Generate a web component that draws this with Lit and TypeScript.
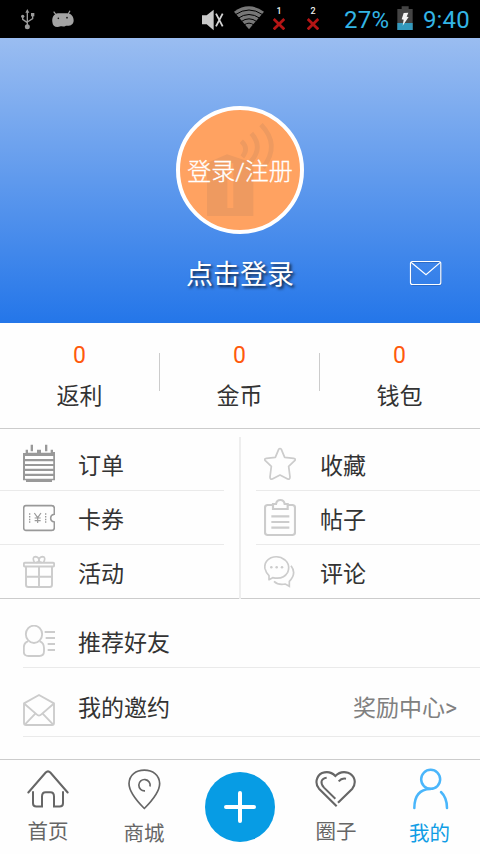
import { LitElement, html, svg, css } from "lit";
import { customElement } from "lit/decorators.js";
import { classMap } from "lit/directives/class-map.js";

const icon = (box: string, w: number, h: number, body: unknown) =>
  html`<svg width=${w} height=${h} viewBox=${box} fill="none">${body}</svg>`;

const icons = {
  usb: icon("60 24 48 66", 16, 22, svg`<g stroke="#9a9a9a" stroke-width="4">
    <path d="M82 34V78M68 50V58L82 68M98 46V56L82 66"/></g>
    <g fill="#9a9a9a"><path d="M76 38L82 27L88 38Z"/><circle cx="82" cy="80" r="7.500"/><circle cx="68" cy="49" r="5"/><path d="M93 39h10v10h-10z"/></g>`),
  robot: icon("153 27 72 60", 24, 20, svg`<path fill="#a3a3a3" d="M157 66C155 52 162 42 174 40H200C214 40 221 50 221 62C220 74 210 79 198 77C192 81 186 79 182 79C168 84 158 79 157 66Z"/>
    <path stroke="#a3a3a3" stroke-width="3.500" d="M168 44L161 35M204 43L210 32"/><circle cx="175" cy="55" r="2.500" fill="#111"/><circle cx="201" cy="53" r="2.500" fill="#111"/>`),
  mute: icon("33 27 69 66", 23, 22, svg`<path fill="#c9c9c9" d="M36 46H50L71 29V91L50 73H36Z"/><path stroke="#d2d2d2" stroke-width="5.500" d="M78 41L98 79M98 41L78 79"/>`),
  wifi: icon("129 15 96 75", 32, 25, svg`<path fill="#777" d="M132 35Q177 3 222 35L177 88Z"/>
    <g stroke="#000" stroke-width="3"><path d="M136 44Q177 16 218 44M144 55Q177 32 210 55M153 65Q177 48 201 65M162 75Q177 64 192 75"/></g>`),
  cross: icon("0 0 36 36", 12, 12, svg`<path stroke="#b51515" stroke-width="8.500" d="M2 3L34 34M34 3L2 34"/>`),
  battery: icon("621 18 48 72", 16, 24, svg`<path fill="#444" d="M635 19h21v8h12v63H622V27h13z"/><path fill="#3399bd" d="M622 69h46v21h-46z"/>
    <path fill="#f4f4f4" d="M641 39L655 38L650 50L656 51L638 77L641 59L635 58Z"/>`),
  mail: icon("717 30 99 78", 33, 26, svg`<g stroke="#1d4f9c" stroke-opacity=".55" stroke-width="3"><rect x="723" y="37" width="91" height="69" rx="6"/></g>
    <g stroke="#fff" stroke-width="3.600"><rect x="721.500" y="34.500" width="91" height="69" rx="6"/><path d="M723 37L768 74L811 37"/></g>`),
  order: icon("69 42 96 117", 32, 39, svg`<g fill="#999"><path d="M69 69h8v-10h7v9h27v-9h12v9h29v-9h7v7h6v85h-9v5H78v-5h-9z"/><path d="M92 44h7v20h-7zM135 44h7v20h-7z"/></g>
    <path stroke="#fff" stroke-width="8.500" d="M75 82.500H160M75 98H160M75 112H160M75 127H160M75 142H160"/><path stroke="#999" stroke-width="4" d="M71 70V150M163 70V150"/>`),
  coupon: icon("69 219 96 84", 32, 28, svg`<path stroke="#999" stroke-width="4.800" d="M77 224H155Q163 224 163 232V250Q152 252 152 262Q152 271 163 273V290Q163 298 155 298H77Q71 298 71 290V232Q71 224 77 224Z"/>
    <path stroke="#999" stroke-width="4" stroke-dasharray="4.500 3.500" d="M89 247V278M137 247V278"/><path stroke="#999" stroke-width="3.500" d="M103 246L113 260L123 246M113 260V276M104 261H122M104 269H122"/>`),
  gift: icon("69 372 96 99", 32, 33, svg`<g stroke="#ccc" stroke-width="5.800"><rect x="71.500" y="395" width="91" height="11.500" rx="4"/><path d="M78 407V461Q78 468 85 468H149Q156 468 156 461V407M117 407V468M79 437H156"/><path stroke-width="5" d="M103 394Q95 377 107 377Q116 378 117 386Q117 394 109 394M131 394Q139 377 127 377Q118 378 117 386Q117 394 125 394"/></g>`),
  star: icon("87 48 96 102", 32, 34, svg`<path stroke="#ccc" stroke-width="5.200" stroke-linejoin="round" d="M131 55Q135 50 139 55L149 79L176 82Q184 83 179 89L161 106L165 138Q165 146 158 144L135 132L112 144Q105 146 105 138L109 106L91 89Q86 83 94 82L121 79Z"/>`),
  post: icon("87 204 96 117", 32, 39, svg`<g stroke="#ccc" stroke-width="6.500"><path d="M114 225H98Q90 225 90 233V307Q90 315 98 315H172Q180 315 180 307V233Q180 225 172 225H158M114 237H158V222H149Q147 210 136 210Q125 210 123 222H114Z"/><path d="M109 259H163M109 276H163M109 293H163"/></g>`),
  comment: icon("87 372 96 99", 32, 33, svg`<g stroke="#ccc" stroke-width="5"><path stroke-linejoin="round" d="M102 434V446L113 440Q145 447 158 424Q167 402 150 387Q132 372 108 380Q86 391 90 413Q93 426 102 434Z"/><path d="M168 404Q186 427 163 451V466L151 459Q129 463 117 451"/></g><g fill="#ccc"><circle cx="109" cy="409" r="3.800"/><circle cx="125" cy="409" r="3.800"/><circle cx="141" cy="409" r="3.800"/></g>`),
  friend: icon("69 75 96 96", 32, 32, svg`<g stroke="#ccc" stroke-width="5.600"><ellipse cx="102" cy="103" rx="24.500" ry="26"/><path d="M84 124Q71 128 71.500 144V154Q71 168 86 168H118Q132 168 132 154V144Q132 128 119 124M134 96H165M137 114H165M143 132H165M143 150H165"/></g>`),
  invite: icon("69 282 96 96", 32, 32, svg`<g stroke="#ccc" stroke-width="5.600" stroke-linejoin="round"><path d="M72 310L117 285L162 310V369Q162 375 156 375H78Q72 375 72 369ZM74 312L110 343Q117 350 124 343L160 312M75 373L106 341M159 373L128 341"/></g>`),
  home: icon("81 57 126 117", 42, 39, svg`<g stroke="#666" stroke-width="6" stroke-linecap="round"><path d="M85 126L137 66Q144 59 151 66L203 126"/><path stroke-linecap="butt" d="M99 122V158Q99 168 109 168H126V138Q126 125 137 125H151Q162 125 162 138V168H179Q189 168 189 158V122"/></g>`),
  pin: icon("384 54 99 123", 33, 41, svg`<g stroke="#666" stroke-width="5"><path stroke-linejoin="round" d="M433 174Q387 128 387 99C388 73 408 59 433 59C458 59 478 73 479 99Q479 128 433 174Z"/><path d="M435 121A17 17 0 1 1 450 108"/></g>`),
  heart: icon("375 57 126 114", 42, 38, svg`<g stroke="#666" stroke-width="6.400"><path d="M440 166L387 113C373 97 380 74 396 66Q420 58 436 75Q451 59 474 65C495 73 500 96 487 113L444 155"/><path stroke-width="6" d="M410 80C392 82 390 97 402 110L436 143M446 91Q455 80 468 83"/></g>`),
  person: icon("666 54 114 126", 38, 42, svg`<g stroke="#4ab6fb" stroke-width="7.500" stroke-linecap="round"><circle cx="722" cy="88" r="28.500"/><path d="M673 174C673 140 687 118 721 117M753 126Q771 143 771 174"/></g>`),
};

@customElement("app-root")
export class AppRoot extends LitElement {
  static styles = css`
    * { box-sizing: border-box; }
    :host { display: flex; flex-direction: column; width: 480px; height: 854px; overflow: hidden; background: #fefefe; color: #333; font: 23px/30px Roboto, "Noto Sans CJK SC", sans-serif; }
    svg { display: block; flex: none; }
    .status { height: 38px; flex: none; background: #000; display: flex; align-items: center; color: #33b5e5; padding: 0 10px 0 20px; font-size: 24px; }
    .robot { margin-left: 15px; }
    .mute { margin-left: 126px; margin-top: 2px; }
    .wifi { margin-left: 9px; margin-top: -3px; }
    .sim { width: 12px; display: flex; flex-direction: column; align-items: center; gap: 2px; color: #eee; font-size: 9px; line-height: 9px; font-weight: 500; margin: -2px 0 0 8px; }
    .sim + .sim { margin-left: 22px; }
    .percent { margin-left: 25px; width: 47px; letter-spacing: .3px; margin-top: 2px; }
    .battery { margin-left: 6px; margin-top: -2px; }
    .clock { margin-left: auto; letter-spacing: .2px; margin-top: 2px; }
    .hero { height: 285px; flex: none; background: linear-gradient(#9abdf1, #2476e9); display: flex; flex-direction: column; align-items: center; padding-top: 68px; }
    .avatar { width: 128px; height: 128px; border-radius: 50%; border: 4px solid #fff; background: #ffa261; display: grid; place-items: center; overflow: hidden; color: #fff; font-size: 24px; white-space: nowrap; }
    .avatar > * { grid-area: 1 / 1; }
    .login { margin-top: 4px; font-weight: 300; -webkit-text-stroke: .3px #fff; }
    .under { width: 100%; display: grid; grid-template-columns: 1fr auto 1fr; align-items: center; margin-top: 20px; height: 38px; color: #fff; }
    .name { grid-column: 2; font-size: 27px; text-shadow: 2px 2px 3px #000b; margin-top: 4px; }
    .mail { justify-self: end; margin-right: 38px; }
    .stats { height: 106px; flex: none; display: grid; grid-template-columns: repeat(3, 160px); border-bottom: 1px solid #ccc; align-items: center; }
    .stat { display: flex; flex-direction: column; align-items: center; gap: 11px; position: relative; padding-right: 1px; margin-top: 2px; }
    .stat:not(:last-child)::after { content: ""; position: absolute; right: 0; top: 12px; width: 1px; height: 38px; background: #ccc; }
    .value { color: #ff5a0c; }
    .grid { height: 170px; flex: none; display: grid; grid-template-columns: 224px 32px 224px; padding-top: 8px; border-bottom: 1px solid #ccc; }
    .bar { width: 2px; height: 162px; background: #eee; margin-left: 15px; }
    .cell { height: 54px; display: flex; align-items: center; gap: 23px; padding-left: 23px; border-bottom: 1px solid #eaeaea; }
    .right .cell { padding-left: 8px; gap: 24px; }
    .cell:last-child { border-bottom-color: transparent; }
    .cell span { margin-top: 7px; }
    .row { height: 69px; flex: none; margin-left: 23px; padding-top: 16px; display: flex; align-items: center; gap: 23px; border-bottom: 1px solid #eaeaea; }
    .row span { margin-top: 6px; }
    .row.second span { margin-top: -2px; }
    .row .more { margin-left: auto; padding-right: 23px; color: #808080; }
    .nav { height: 95px; margin-top: 22px; flex: none; border-top: 1px solid #ccc; display: grid; grid-template-columns: repeat(5, 96px); font-size: 20.500px; color: #666; }
    .tab { display: flex; flex-direction: column; align-items: center; padding-top: 8px; }
    .tab svg { height: 42px; }
    .tab span { margin-top: 7px; }
    .tab.low span { margin-top: 9px; }
    .tab.active { color: #109de5; padding-right: 5px; }
    .tab.active svg { margin-left: 3px; }
    .add { width: 70px; height: 70px; border-radius: 50%; background: #079ce4; margin: 12px auto 0; display: grid; place-items: center; }
  `;

  private cell(i: unknown, label: string) {
    return html`<div class="cell">${i}<span>${label}</span></div>`;
  }

  private tab(i: unknown, label: string, low = false, active = false) {
    return html`<div class=${classMap({ tab: true, low, active })}>${i}<span>${label}</span></div>`;
  }

  render() {
    return html`
      <div class="status">
        ${icons.usb}<div class="robot">${icons.robot}</div>
        <div class="mute">${icons.mute}</div><div class="wifi">${icons.wifi}</div>
        <div class="sim"><span>1</span>${icons.cross}</div><div class="sim"><span>2</span>${icons.cross}</div>
        <span class="percent">27%</span><div class="battery">${icons.battery}</div><span class="clock">9:40</span>
      </div>
      <div class="hero">
        <div class="avatar">
          <svg width="120" height="120" viewBox="45 45 360 360" fill="none">
            <path fill="#ee9a60" d="M126 363V204L186 178L265 204V363Z"/><path fill="#ffa261" d="M187 205h18v134h-18z"/>
            <g stroke="#ee9a60" stroke-width="14"><path d="M229 139Q253 160 232 186"/><path d="M259 115Q296 157 257 200"/><path d="M288 89Q347 150 294 218"/></g>
          </svg>
          <span class="login">登录/注册</span>
        </div>
        <div class="under"><span class="name">点击登录</span><div class="mail">${icons.mail}</div></div>
      </div>
      <div class="stats">
        ${["返利", "金币", "钱包"].map((l) => html`<div class="stat"><span class="value">0</span><span>${l}</span></div>`)}
      </div>
      <div class="grid">
        <div>${this.cell(icons.order, "订单")}${this.cell(icons.coupon, "卡券")}${this.cell(icons.gift, "活动")}</div>
        <div class="bar"></div>
        <div class="right">${this.cell(icons.star, "收藏")}${this.cell(icons.post, "帖子")}${this.cell(icons.comment, "评论")}</div>
      </div>
      <div class="row">${icons.friend}<span>推荐好友</span></div>
      <div class="row second">${icons.invite}<span>我的邀约</span><span class="more">奖励中心&gt;</span></div>
      <div class="nav">
        ${this.tab(icons.home, "首页")}
        ${this.tab(icons.pin, "商城", true)}
        <div class="add"><svg width="32" height="32" viewBox="0 0 32 32"><path stroke="#fff" stroke-width="4" stroke-linecap="round" d="M2 16H30M16 2V30"/></svg></div>
        ${this.tab(icons.heart, "圈子")}
        ${this.tab(icons.person, "我的", true, true)}
      </div>
    `;
  }
}
